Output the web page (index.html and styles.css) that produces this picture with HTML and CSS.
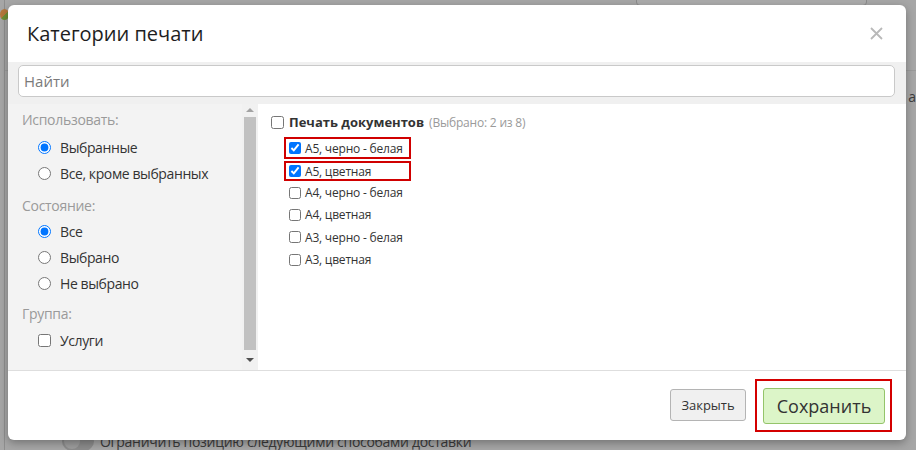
FILE: index.html
```html
<!DOCTYPE html>
<html lang="ru">
<head>
<meta charset="utf-8">
<title>Категории печати</title>
<link rel="stylesheet" href="styles.css">
</head>
<body>
<div class="page">
  <div class="page-top">
    <span class="logo"></span>
    <span class="page-btn"></span>
  </div>
  <div class="page-mid"><span class="page-cut">а</span></div>
  <div class="page-bottom">
    <span class="toggle"><span class="knob"></span></span>
    <span class="page-text">Ограничить позицию следующими способами доставки</span>
  </div>
</div>

<div class="modal">
  <header class="m-head">
    <h1 class="m-title">Категории печати</h1>
    <button class="m-close" aria-label="Закрыть">
      <svg width="13" height="13" viewBox="0 0 13 13"><path d="M1 1L12 12M12 1L1 12" stroke="#b9b9b9" stroke-width="1.8" fill="none"/></svg>
    </button>
  </header>

  <div class="search-wrap">
    <input class="search" type="text" placeholder="Найти">
  </div>

  <div class="panes">
    <aside class="filters">
      <div class="filters-inner">
        <div class="f-label">Использовать:</div>
        <div class="f-group g-use">
          <label class="f-opt"><input type="radio" name="use" checked><span>Выбранные</span></label>
          <label class="f-opt"><input type="radio" name="use"><span>Все, кроме выбранных</span></label>
        </div>
        <div class="f-label">Состояние:</div>
        <div class="f-group g-state">
          <label class="f-opt"><input type="radio" name="state" checked><span>Все</span></label>
          <label class="f-opt"><input type="radio" name="state"><span>Выбрано</span></label>
          <label class="f-opt"><input type="radio" name="state"><span>Не выбрано</span></label>
        </div>
        <div class="f-label">Группа:</div>
        <div class="f-group g-group">
          <label class="f-opt"><input type="checkbox"><span>Услуги</span></label>
        </div>
      </div>
      <div class="scrollbar">
        <span class="sb-up"><span class="tri tri-up"></span></span>
        <span class="sb-thumb"></span>
        <span class="sb-down"><span class="tri tri-down"></span></span>
      </div>
    </aside>

    <section class="list">
      <label class="l-head"><input type="checkbox"><b>Печать документов</b><span class="l-count">(Выбрано: 2 из 8)</span></label>
      <label class="l-item marked first"><input type="checkbox" checked><span>А5, черно - белая</span></label>
      <label class="l-item marked second"><input type="checkbox" checked><span>А5, цветная</span></label>
      <label class="l-item"><input type="checkbox"><span>А4, черно - белая</span></label>
      <label class="l-item"><input type="checkbox"><span>А4, цветная</span></label>
      <label class="l-item"><input type="checkbox"><span>А3, черно - белая</span></label>
      <label class="l-item"><input type="checkbox"><span>А3, цветная</span></label>
    </section>
  </div>

  <footer class="m-foot">
    <button class="btn btn-close">Закрыть</button>
    <div class="highlight">
      <button class="btn btn-save">Сохранить</button>
    </div>
  </footer>
</div>
</body>
</html>
```

FILE: styles.css
```css
* { box-sizing: border-box; }

html, body {
  margin: 0;
  padding: 0;
  width: 916px;
  height: 450px;
  overflow: hidden;
}

body {
  background: #a6a6a6;
  font-family: "Open Sans", "Noto Sans", sans-serif;
  color: #333;
  position: relative;
}

/* ---------- dimmed page behind ---------- */
.page {
  height: 450px;
  margin-left: 4px;
  border-left: 1px solid #8e8e8e;
  display: flex;
  flex-direction: column;
}

.page-top {
  display: flex;
  justify-content: space-between;
  align-items: flex-start;
  height: 60px;
}

.logo {
  width: 9px;
  height: 11px;
  margin-top: 9px;
  margin-left: -5px;
  border-radius: 50%;
  background: linear-gradient(135deg, #b5773a 0 55%, #6f8f34 55%);
}

.page-btn {
  width: 231px;
  height: 20px;
  margin-top: -14px;
  margin-right: 49px;
  border: 1px solid #8a8a8a;
  border-radius: 4px;
  background: #ababab;
}

.page-mid {
  display: flex;
  justify-content: flex-end;
  height: 80px;
  border-top: 1px solid #9a9a9a;
  margin-top: 10px;
}

.page-cut {
  font-size: 14px;
  color: #3c3c3c;
  margin-top: 16px;
}

.page-bottom {
  margin-top: auto;
  display: flex;
  align-items: center;
  gap: 6px;
  padding-left: 57px;
  height: 20px;
  margin-bottom: -1px;
}

.toggle {
  width: 32px;
  height: 20px;
  border-radius: 10px;
  background: #8c8c8c;
  display: flex;
  align-items: center;
  padding-left: 2px;
}

.knob {
  width: 16px;
  height: 16px;
  border-radius: 50%;
  background: #9d9d9d;
}

.page-text {
  font-size: 14px;
  color: #3a3a3a;
  letter-spacing: -0.3px;
}

/* ---------- modal ---------- */
.modal {
  position: absolute;
  left: 8px;
  top: 5px;
  width: 898px;
  height: 435px;
  background: #fff;
  border-radius: 6px;
  box-shadow: 0 3px 9px rgba(0, 0, 0, 0.3);
  display: flex;
  flex-direction: column;
  overflow: hidden;
}

.m-head {
  height: 57px;
  flex: none;
  display: flex;
  align-items: center;
  justify-content: space-between;
  padding: 0 23px 0 19px;
}

.m-title {
  margin: 0;
  font-size: 20px;
  font-weight: 400;
  color: #1e1e1e;
}

.m-close {
  border: 0;
  background: none;
  padding: 0;
  width: 13px;
  height: 13px;
  display: flex;
}

.search-wrap {
  flex: none;
  background: #f0f0f0;
  padding: 3px 11px 7px 10px;
}

.search {
  display: block;
  width: 100%;
  height: 32px;
  border: 1px solid #c9c9c9;
  border-radius: 5px;
  background: #fff;
  padding: 0 5px;
  font-family: inherit;
  font-size: 15px;
  color: #333;
  outline: none;
}

.search::placeholder {
  color: #7a7a7a;
}

.panes {
  flex: none;
  height: 267px;
  display: flex;
  border-bottom: 1px solid #dedede;
}

.filters {
  width: 250px;
  flex: none;
  display: flex;
  background: #f3f3f3;
}

.filters-inner {
  width: 234px;
  padding: 6px 0 0 14px;
}

.f-label {
  font-size: 14px;
  line-height: 20px;
  color: #9a9a9a;
  letter-spacing: -0.3px;
}

.f-group {
  padding-left: 16px;
}

.g-use {
  padding-top: 5px;
  padding-bottom: 10px;
}

.g-state {
  padding-top: 3px;
  padding-bottom: 8px;
}

.g-group {
  padding-top: 4px;
}

.f-opt {
  display: flex;
  align-items: center;
  height: 25.6px;
  font-size: 14px;
  color: #333;
  letter-spacing: -0.4px;
}

.f-opt input {
  margin: 0 9px 0 0;
  width: 13px;
  height: 13px;
}

.scrollbar {
  width: 16px;
  flex: none;
  background: #f1f1f1;
  display: flex;
  flex-direction: column;
  align-items: center;
}

.sb-up {
  height: 13px;
  display: flex;
  align-items: center;
  justify-content: center;
}

.sb-thumb {
  width: 12px;
  height: 234px;
  background: #c1c1c1;
  margin-left: -1px;
}

.sb-down {
  height: 20px;
  display: flex;
  align-items: center;
  justify-content: center;
}

.tri {
  width: 0;
  height: 0;
  border-left: 4px solid transparent;
  border-right: 4px solid transparent;
}

.tri-up {
  border-bottom: 4px solid #a3a3a3;
}

.tri-down {
  border-top: 4px solid #505050;
}

.list {
  flex: 1;
  background: #fff;
  padding: 8px 0 0 13px;
  display: flex;
  flex-direction: column;
  align-items: flex-start;
}

.l-head {
  display: flex;
  align-items: center;
  height: 20px;
  margin-bottom: 5px;
  font-size: 13px;
  color: #333;
  white-space: nowrap;
}

.l-head input {
  margin: 0 5px 0 0;
  width: 13px;
  height: 13px;
}

.l-head b {
  font-weight: 700;
}

.l-count {
  font-size: 12px;
  color: #9a9a9a;
  margin-left: 5px;
  letter-spacing: -0.2px;
}

.l-item {
  display: flex;
  align-items: center;
  height: 22.4px;
  padding-left: 18px;
  font-size: 12px;
  color: #333;
  white-space: nowrap;
  letter-spacing: -0.2px;
}

.l-item input {
  margin: 0 4px 0 0;
  width: 12px;
  height: 12px;
}

.l-item.marked {
  border: 2px solid #d00000;
  margin-left: 13px;
  padding-left: 3px;
  width: 127px;
}

.l-item.second {
  height: 20px;
  margin-top: 2px;
}

.m-foot {
  flex: 1;
  display: flex;
  justify-content: flex-end;
  align-items: center;
  gap: 9px;
  padding: 0 14px 1px 0;
}

.btn {
  font-family: inherit;
  color: #333;
  border-radius: 3px;
  cursor: pointer;
}

.btn-close {
  width: 76px;
  height: 32px;
  background: #f0f0f0;
  border: 1px solid #b4b4b4;
  font-size: 13px;
}

.highlight {
  border: 2px solid #d40000;
  padding: 7px 5px 6px 6px;
}

.btn-save {
  display: block;
  width: 122px;
  height: 36px;
  background: #dcf5c8;
  border: 1px solid #94c46a;
  font-size: 18px;
  color: #333;
}
```
